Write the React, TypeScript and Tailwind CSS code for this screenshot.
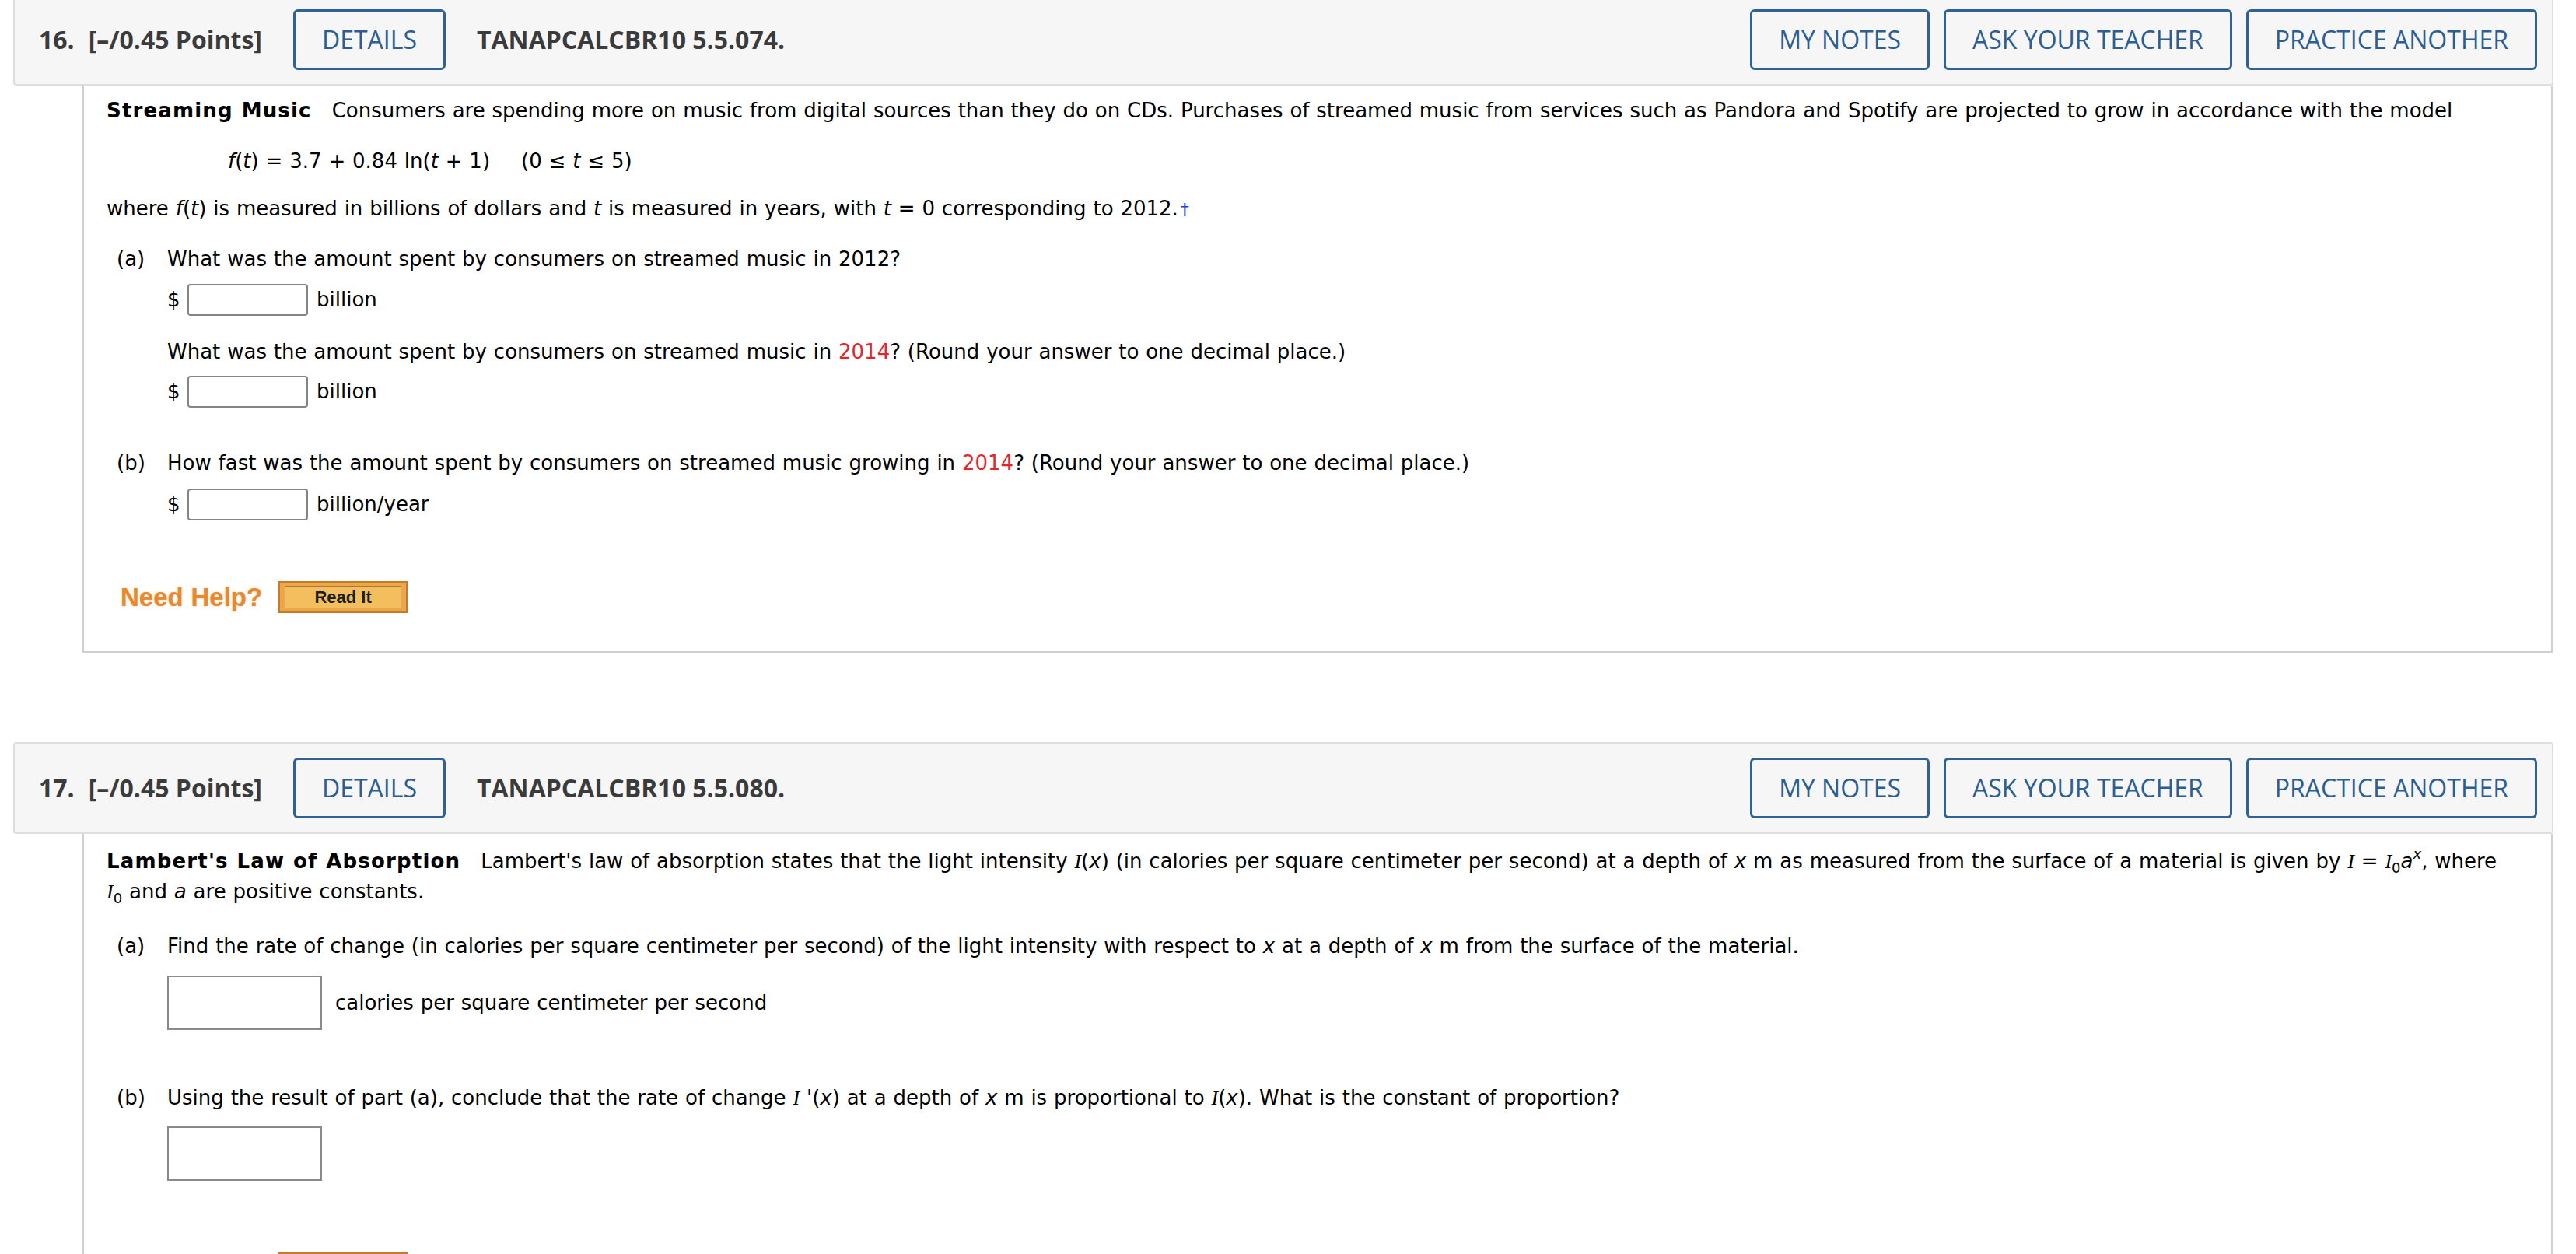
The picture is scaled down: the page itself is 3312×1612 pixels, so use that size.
import type { ReactNode } from 'react';

function HeaderButton({ children, className = '' }: { children: ReactNode; className?: string }) {
  return (
    <button
      className={`flex h-[78px] items-center rounded-[6px] border-[3px] border-[#2e6296] px-[34px] text-[32px] font-medium text-[#2b5e92] ${className}`}
    >
      {children}
    </button>
  );
}

function Header({ num, code }: { num: number; code: string }) {
  return (
    <div className="flex items-center rounded-[4px] border-2 border-[#dedede] bg-[#f6f6f6] py-[18px] pl-[31px] pr-[19px] font-['Open_Sans',sans-serif] text-[32px] leading-[44px]">
      <span className="font-bold text-[#3b3b3b]">{num}.</span>
      <span className="ml-[18px] font-bold text-[#3b3b3b]">[–/0.45 Points]</span>
      <HeaderButton className="ml-[40px]">DETAILS</HeaderButton>
      <span className="ml-[40px] font-bold text-[#3b3b3b]">{code}</span>
      <div className="ml-auto flex gap-[18px]">
        <HeaderButton>MY NOTES</HeaderButton>
        <HeaderButton>ASK YOUR TEACHER</HeaderButton>
        <HeaderButton>PRACTICE ANOTHER</HeaderButton>
      </div>
    </div>
  );
}

function Part({ label, className = '', children }: { label: string; className?: string; children: ReactNode }) {
  return (
    <div className={`flex ${className}`}>
      <span className="w-[78px] shrink-0 pl-[13px]">({label})</span>
      <div className="min-w-0 flex-1">{children}</div>
    </div>
  );
}

function DollarInput({ unit, className = '' }: { unit: string; className?: string }) {
  return (
    <div className={`flex h-[41px] items-center ${className}`}>
      <span className="w-[26px]">$</span>
      <input className="h-[41px] w-[155px] rounded-[4px] border-2 border-[#858585] bg-white" />
      <span className="ml-[11px]">{unit}</span>
    </div>
  );
}

function BoxInput({ unit, className = '' }: { unit?: string; className?: string }) {
  return (
    <div className={`flex items-center ${className}`}>
      <input className="h-[70px] w-[199px] border-2 border-[#8a8a8a] bg-white" />
      {unit && <span className="ml-[17px]">{unit}</span>}
    </div>
  );
}

function NeedHelp({ className = '' }: { className?: string }) {
  return (
    <div className={`flex items-center pl-[18px] ${className}`}>
      <span className="font-['Liberation_Sans',Arial,sans-serif] text-[33px] font-bold leading-none text-[#e8892e] [text-shadow:0_0_2px_rgba(232,137,46,0.6)]">
        Need Help?
      </span>
      <button className="ml-[21px] flex h-[41px] w-[166px] items-center justify-center border-2 border-[#c77a2a] bg-[#eba748] px-[6px] py-[4px]">
        <span className="flex h-full w-full items-center justify-center border border-[#b07834] bg-[#f3bf5e] font-['Liberation_Sans',Arial,sans-serif] text-[22px] font-bold leading-none text-[#1e1e1e]">
          Read It
        </span>
      </button>
    </div>
  );
}

const serifI = "font-['Liberation_Serif',serif] italic";
const body =
  "ml-[89px] mr-[1px] border-x-2 border-b-2 border-[#d0d0d0] pb-[49px] pl-[29px] pr-[50px] font-['DejaVu_Sans',Verdana,sans-serif] text-[26px] leading-[39px] text-black [word-spacing:0.6px]";

export default function App() {
  return (
    <div className="min-h-screen overflow-hidden bg-white pl-[17px] pr-[29px]">
      <div className="-mt-[8px]">
        <Header num={16} code="TANAPCALCBR10 5.5.074." />
        <div className={`${body} pt-[13px]`}>
          <p>
            <b className="tracking-[0.045em]">Streaming Music</b>
            <span className="ml-[26px]">
              Consumers are spending more on music from digital sources than they do on CDs. Purchases of streamed music
              from services such as Pandora and Spotify are projected to grow in accordance with the model
            </span>
          </p>
          <p className="mt-[26px] pl-[156px]">
            <i>f</i>(<i>t</i>) = 3.7 + 0.84 ln(<i>t</i> + 1)
            <span className="ml-[40px]">
              (0 ≤ <i>t</i> ≤ 5)
            </span>
          </p>
          <p className="mt-[22px]">
            where <i>f</i>(<i>t</i>) is measured in billions of dollars and <i>t</i> is measured in years, with <i>t</i> = 0
            corresponding to 2012.<span className="ml-[3px] text-[22px] text-[#1a3ccf]">†</span>
          </p>

          <Part label="a" className="mt-[25px]">
            <p>What was the amount spent by consumers on streamed music in 2012?</p>
            <DollarInput unit="billion" className="mt-[12px]" />
            <p className="mt-[27px]">
              What was the amount spent by consumers on streamed music in <span className="text-[#e4262c]">2014</span>?
              (Round your answer to one decimal place.)
            </p>
            <DollarInput unit="billion" className="mt-[11px]" />
          </Part>

          <Part label="b" className="mt-[52px]">
            <p>
              How fast was the amount spent by consumers on streamed music growing in{' '}
              <span className="text-[#e4262c]">2014</span>? (Round your answer to one decimal place.)
            </p>
            <DollarInput unit="billion/year" className="mt-[13px]" />
          </Part>

          <NeedHelp className="mt-[78px]" />
        </div>

        <div className="mt-[115px]">
          <Header num={17} code="TANAPCALCBR10 5.5.080." />
          <div className={`${body} pt-[16px]`}>
            <p>
              <b className="tracking-[0.045em]">Lambert's Law of Absorption</b>
              <span className="ml-[26px]">
                Lambert's law of absorption states that the light intensity <i className={serifI}>I</i>(<i>x</i>) (in
                calories per square centimeter per second) at a depth of <i>x</i> m as measured from the surface of a
                material is given by <i className={serifI}>I</i> = <i className={serifI}>I</i>
                <sub className="relative top-[6px] align-baseline text-[18px] leading-none">0</sub>
                <i>a</i>
                <sup className="relative -top-[12px] align-baseline text-[18px] leading-none">
                  <i>x</i>
                </sup>
                , where <i className={serifI}>I</i>
                <sub className="relative top-[6px] align-baseline text-[18px] leading-none">0</sub> and <i>a</i> are
                positive constants.
              </span>
            </p>

            <Part label="a" className="mt-[31px]">
              <p>
                Find the rate of change (in calories per square centimeter per second) of the light intensity with
                respect to <i>x</i> at a depth of <i>x</i> m from the surface of the material.
              </p>
              <BoxInput unit="calories per square centimeter per second" className="mt-[18px]" />
            </Part>

            <Part label="b" className="mt-[68px]">
              <p>
                Using the result of part (a), conclude that the rate of change <i className={serifI}>I</i> '(<i>x</i>) at
                a depth of <i>x</i> m is proportional to <i className={serifI}>I</i>(<i>x</i>). What is the constant of
                proportion?
              </p>
              <BoxInput className="mt-[17px]" />
            </Part>

            <NeedHelp className="mt-[92px]" />
          </div>
        </div>
      </div>
    </div>
  );
}
